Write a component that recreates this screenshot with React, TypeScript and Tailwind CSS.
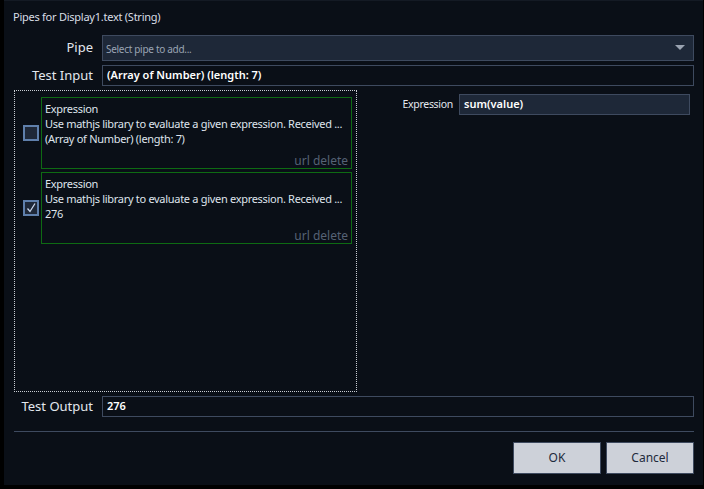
import React from "react";

const font = { fontFamily: '"Noto Sans", "Open Sans", sans-serif' };

function Card({ value, checked }: { value: string; checked: boolean }) {
  return (
    <div className="flex items-center">
      <div className="w-[26px] shrink-0 flex justify-end pr-[2px]">
        <div className="w-[16px] h-[16px] border-2 border-[#5f7fab] bg-[#1f2838] flex items-center justify-center">
          {checked && (
            <svg width="12" height="12" viewBox="0 0 12 12">
              <path d="M2.5 6.5 L5 9.5 L10 1.5" stroke="#c9d6ec" strokeWidth="1.3" fill="none" />
            </svg>
          )}
        </div>
      </div>
      <div className="w-[311px] shrink-0 h-[72px] border border-solid border-[#0e6b13] px-[3px] pt-[3px] flex flex-col text-[11px] leading-[15px] tracking-[-0.3px] text-[#dfe4ec]">
        <div>Expression</div>
        <div className="whitespace-nowrap">Use mathjs library to evaluate a given expression. Received ...</div>
        <div>{value}</div>
        <div className="mt-auto text-right text-[12px] tracking-normal text-[#566275]">url delete</div>
      </div>
    </div>
  );
}

export default function App() {
  return (
    <div className="w-[704px] h-[489px] bg-black flex" style={font}>
      <div className="ml-[4px] w-[699px] h-[485px] bg-[#0a0f17] border-t border-[#141a24] pl-[10px] pr-[9px] flex flex-col">
        <div className="mt-[8px] h-[16px] text-[11px] leading-[16px] tracking-[-0.25px] text-[#d9dee6] -ml-[1px]">Pipes for Display1.text (String)</div>
        <div className="mt-[10px] flex items-center h-[26px]">
          <div className="w-[79px] text-right text-[13px] text-[#e3e7ee]">Pipe</div>
          <div className="ml-[9px] flex-1 h-[26px] bg-[#1e2838] border border-[#3e4a5f] flex items-center pl-[3px] pr-[8px] text-[10px] tracking-[-0.3px] text-[#9aa4b3]">
            <span className="flex-1 pt-[2px]">Select pipe to add...</span>
            <svg width="10" height="6" viewBox="0 0 10 6">
              <path d="M0 0 L10 0 L5 5 Z" fill="#9aa3b1" />
            </svg>
          </div>
        </div>
        <div className="mt-[4px] flex items-center h-[21px]">
          <div className="w-[79px] text-right text-[13px] text-[#e3e7ee]">Test Input</div>
          <div className="ml-[9px] flex-1 h-[21px] border border-[#3e4a5f] flex items-center pl-[4px] text-[11px] font-semibold text-white">
            (Array of Number) (length: 7)
          </div>
        </div>
        <div className="mt-[4px] flex">
          <div className="w-[343px] h-[302px] border border-dotted border-[#c8ccd2] pt-[6px] flex flex-col gap-[3px]">
            <Card value="(Array of Number) (length: 7)" checked={false} />
            <Card value="276" checked={true} />
          </div>
          <div className="flex-1 pt-[4px] pr-[4px]">
            <div className="flex items-center justify-end h-[21px]">
              <div className="text-[10.5px] tracking-[-0.3px] text-[#e3e7ee]">Expression</div>
              <div className="ml-[6px] w-[231px] h-[21px] bg-[#1e2838] border border-[#3e4a5f] flex items-center pl-[4px] text-[11px] font-semibold text-white">
                sum(value)
              </div>
            </div>
          </div>
        </div>
        <div className="mt-[4px] flex items-center h-[21px]">
          <div className="w-[79px] text-right text-[13px] text-[#e3e7ee]">Test Output</div>
          <div className="ml-[9px] flex-1 h-[21px] border border-[#3e4a5f] flex items-center pl-[4px] text-[11px] font-semibold text-white">
            276
          </div>
        </div>
        <div className="mt-[14px] h-px bg-[#3e4a5f]" />
        <div className="mt-[10px] flex justify-end gap-[5px]">
          <button className="w-[88px] h-[32px] bg-[#cdd1d9] border border-[#3e4a5f] text-[12px] text-[#1e2a3c]">OK</button>
          <button className="w-[88px] h-[32px] bg-[#cdd1d9] border border-[#3e4a5f] text-[12px] text-[#1e2a3c]">Cancel</button>
        </div>
      </div>
    </div>
  );
}
